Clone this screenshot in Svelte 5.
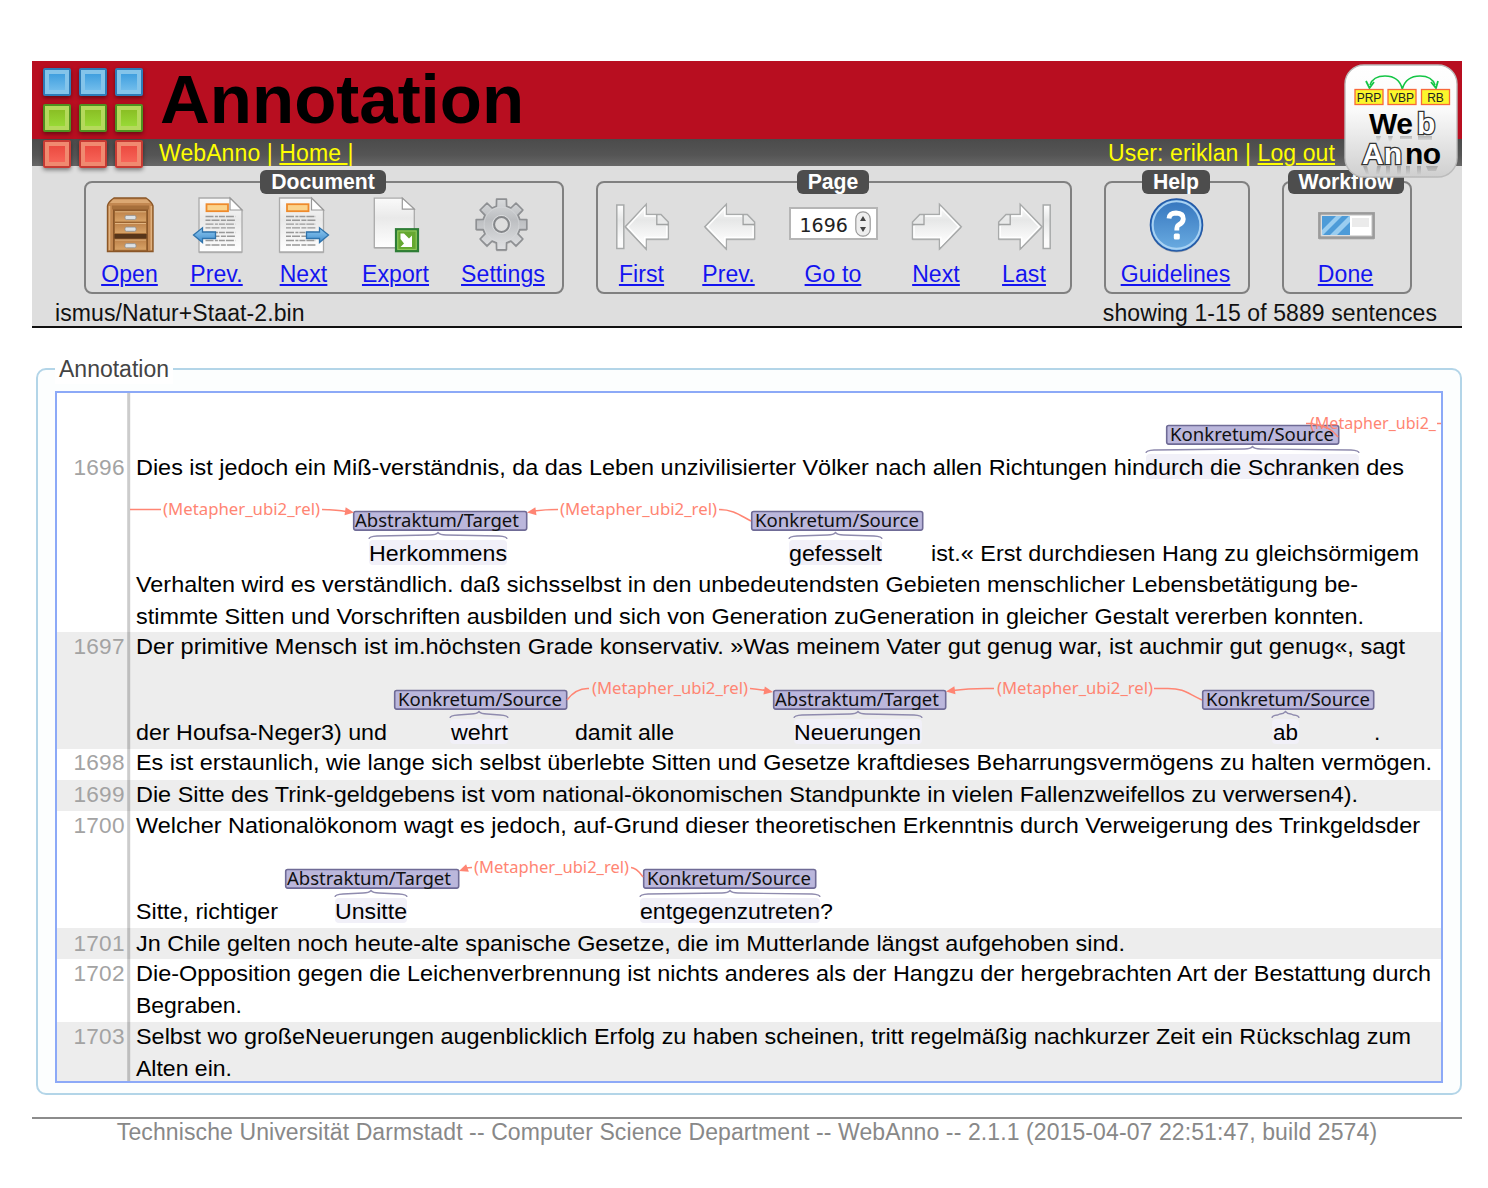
<script>
  const squares = ['blue', 'blue', 'blue', 'green', 'green', 'green', 'red', 'red', 'red'];

  const groups = [
    {
      id: 'document',
      title: 'Document',
      items: [
        ['open', 'Open'],
        ['docPrev', 'Prev.'],
        ['docNext', 'Next'],
        ['export', 'Export'],
        ['settings', 'Settings']
      ]
    },
    {
      id: 'page',
      title: 'Page',
      items: [
        ['first', 'First'],
        ['prev', 'Prev.'],
        ['goto', 'Go to'],
        ['next', 'Next'],
        ['last', 'Last']
      ]
    },
    { id: 'help', title: 'Help', items: [['help', 'Guidelines']] },
    { id: 'workflow', title: 'Workflow', items: [['done', 'Done']] }
  ];

  // Eight-toothed outline for the settings icon
  function gearPath(cx, cy, outer, inner) {
    const pts = [];
    for (let i = 0; i < 8; i++) {
      const a = (i * Math.PI) / 4;
      for (const [d, r] of [[-0.27, inner], [-0.19, outer], [0.19, outer], [0.27, inner]]) {
        pts.push(`${(cx + r * Math.sin(a + d)).toFixed(1)} ${(cy - r * Math.cos(a + d)).toFixed(1)}`);
      }
    }
    return `M${pts.join('L')}Z`;
  }
  const gear = gearPath(28.5, 28.5, 25.8, 19);

  // Every line is drawn around its own text baseline (y = 0).
  // words: [x, end, text]; spans: [x, end] of marked text; tags: [x, end, label]
  // arcs: {path, head: [x, y, angle], text: [x, width, label]}
  const REL = '(Metapher_ubi2_rel)';
  const SRC = 'Konkretum/Source';
  const TGT = 'Abstraktum/Target';
  const lines = [
    { no: 1696, up: 82, down: 9,
      words: [[136, 1404, 'Dies ist jedoch ein Miß-verständnis, da das Leben unzivilisierter Völker nach allen Richtungen hindurch die Schranken des']],
      spans: [[1146, 1359]], tags: [[1166, 1339, SRC]],
      arcs: [
        { path: 'M1306 -51.5H1313M1313 -51Q1330 -49 1338 -38', text: [1310, 126, '(Metapher_ubi2_'] },
        { path: 'M1437 -51.5H1442' }
      ] },
    { up: 77, down: 9,
      words: [[369, 507, 'Herkommens'], [789, 882, 'gefesselt'], [931, 1419, 'ist.« Erst durchdiesen Hang zu gleichsörmigem']],
      spans: [[369, 507], [789, 882]], tags: [[353, 527, TGT], [751, 923, SRC]],
      arcs: [
        { path: 'M130 -51.5H161M322 -51.5Q338 -51 346 -49.5', head: [354, -48.5, 8], text: [163, 157, REL] },
        { path: 'M558 -51.5Q545 -51.5 534 -50M719 -51.5C734 -51.5 741 -45 751 -40', head: [527, -48.5, 172], text: [560, 157, REL] }
      ] },
    { up: 22, down: 9, words: [[136, 1358, 'Verhalten wird es verständlich. daß sichsselbst in den unbedeutendsten Gebieten menschlicher Lebensbetätigung be-']] },
    { up: 23, down: 8, words: [[136, 1364, 'stimmte Sitten und Vorschriften ausbilden und sich von Generation zuGeneration in gleicher Gestalt vererben konnten.']] },
    { no: 1697, shade: true, up: 22, down: 9, words: [[136, 1405, 'Der primitive Mensch ist im.höchsten Grade konservativ. »Was meinem Vater gut genug war, ist auchmir gut genug«, sagt']] },
    { shade: true, up: 77, down: 9,
      words: [[136, 387, 'der Houfsa-Neger3) und'], [451, 508, 'wehrt'], [575, 674, 'damit alle'], [794, 921, 'Neuerungen'], [1273, 1298, 'ab'], [1374, 1380, '.']],
      spans: [[450, 508], [794, 922], [1272, 1299]], tags: [[394, 567, SRC], [773, 946, TGT], [1202, 1374, SRC]],
      arcs: [
        { path: 'M567 -40C573 -48 580 -52 589 -51.5M750 -51.5Q757 -51 766 -49.5', head: [773, -48, 10], text: [592, 156, REL] },
        { path: 'M994 -51.5Q970 -52 953 -49.5M1154 -51.5H1168C1185 -51.5 1188 -46 1202 -40', head: [946, -48.5, 172], text: [997, 156, REL] }
      ] },
    { no: 1698, up: 21, down: 10, words: [[136, 1432, 'Es ist erstaunlich, wie lange sich selbst überlebte Sitten und Gesetze kraftdieses Beharrungsvermögens zu halten vermögen.']] },
    { no: 1699, shade: true, up: 22, down: 9, words: [[136, 1358, 'Die Sitte des Trink-geldgebens ist vom national-ökonomischen Standpunkte in vielen Fallenzweifellos zu verwersen4).']] },
    { no: 1700, up: 22, down: 9, words: [[136, 1420, 'Welcher Nationalökonom wagt es jedoch, auf-Grund dieser theoretischen Erkenntnis durch Verweigerung des Trinkgeldsder']] },
    { up: 77, down: 9,
      words: [[136, 278, 'Sitte, richtiger'], [335, 407, 'Unsitte'], [640, 833, 'entgegenzutreten?']],
      spans: [[335, 407], [640, 820]], tags: [[285, 459, TGT], [643, 816, SRC]],
      arcs: [
        { path: 'M472 -51.5L466 -51M631 -51.5C637 -51 640 -46 643 -42', head: [459, -48, 160], text: [474, 155, REL] }
      ] },
    { no: 1701, shade: true, up: 23, down: 8, words: [[136, 1125, 'Jn Chile gelten noch heute-alte spanische Gesetze, die im Mutterlande längst aufgehoben sind.']] },
    { no: 1702, up: 22, down: 9, words: [[136, 1431, 'Die-Opposition gegen die Leichenverbrennung ist nichts anderes als der Hangzu der hergebrachten Art der Bestattung durch']] },
    { up: 23, down: 9, words: [[136, 242, 'Begraben.']] },
    { no: 1703, shade: true, up: 22, down: 9, words: [[136, 1411, 'Selbst wo großeNeuerungen augenblicklich Erfolg zu haben scheinen, tritt regelmäßig nachkurzer Zeit ein Rückschlag zum']] },
    { shade: true, up: 23, down: 5, words: [[136, 232, 'Alten ein.']] }
  ];

  function brace(a, b) {
    const m = (a + b) / 2;
    const r = Math.min(8, (b - a) / 5);
    return `M${a} -22Q${a} -24.5 ${a + r} -25L${m - r} -26Q${m - 2} -26 ${m} -28.5Q${m + 2} -26 ${m + r} -26L${b - r} -25Q${b} -24.5 ${b} -22`;
  }
</script>

{#snippet docSheet(x, w, lines)}
  <path d="M{x} 2H{x + w - 12}L{x + w} 14V56H{x}Z" fill="#999" transform="translate(0 1.2)" opacity=".6" />
  <path d="M{x} 2H{x + w - 12}L{x + w} 14V56H{x}Z" fill="url(#paper)" stroke="#aaa" stroke-width="1.3" />
  <path d="M{x + w - 12} 2V14H{x + w}Z" fill="#fff" stroke="#999" stroke-width="1.2" />
  {#if lines}
    <rect x={x + 7.5} y="8.2" width="21.5" height="7" fill="#fbd38c" stroke="#ee8a2c" stroke-width="1.8" />
    {#each [20.5, 24.3, 28.1, 31.9, 36.5, 40.3, 44.5, 49] as y, i}
      <path d="M{x + 6.5} {y}h30" stroke="#999" stroke-width="1.4" stroke-dasharray={i % 2 ? '5 1 8 1.4' : '8 1.4 3 1 6 1'} />
    {/each}
  {/if}
{/snippet}

{#snippet pageArrow(tip, neck, right, dir)}
  {@const f = dir * 11.5}
  {@const c = dir * 7.3}
  <path d="M{tip} 30.7L{neck} 8.3V18.5H{right - c}L{right} 26V43H{neck}V53Z" fill="#999" opacity=".5" transform="translate(0 1.2)" />
  <path d="M{tip} 30.7L{neck} 8.3V18.5H{right - c}L{right} 26V43H{neck}V53Z" fill="url(#arrowFill)" stroke="#a8aaaa" stroke-width="1.5" />
  <path d="M{right - f - dir} 20H{neck - dir * 1.4}V12L{tip + dir * 2.5} 30.7L{neck - dir * 1.4} 49.5V41.5H{right - dir * 1.5}V30" fill="none" stroke="#fff" stroke-width="1.4" />
  <path d="M{right - f} 18.5V28.5H{right}" fill="none" stroke="#a0a2a2" stroke-width="1.3" />
{/snippet}

{#snippet icon(name)}
  <svg class="icon" viewBox="0 0 60 60" aria-hidden="true">
    {#if name === 'open'}
      <path d="M7.5 10Q8 6 14 2H46Q52 6 53 10V55.5H7.5Z" fill="#c28750" stroke="#8b5727" stroke-width="1.4" />
      <path d="M13 3.5H47L50 7H10Z" fill="#dba873" />
      <path d="M9.5 10V54M51.3 10V54" stroke="#e0b27f" stroke-width="1.5" />
      <rect x="13" y="12.5" width="35" height="43" fill="#8a572a" />
      <rect x="12" y="9.5" width="37" height="4" fill="#a66f3b" />
      {#each [15, 26.7, 43.2] as y}
        <rect x="14.5" y={y} width="32" height="11" fill="url(#wood)" stroke="#9a632f" stroke-width=".8" />
        <path d="M15 {y + .8}h31" stroke="#e2b581" />
        <rect x="25" y={y + 4.4} width="11" height="4.2" rx="1.5" fill="#dde1e4" stroke="#8e8f90" stroke-width=".8" />
      {/each}
      <rect x="14.5" y="38" width="32" height="4.5" fill="#57351a" />
    {:else if name === 'docPrev'}
      {@render docSheet(12, 43, true)}
      <path d="M6.5 39L15.5 31.8V36H28.5V42.5H15.5V46.5Z" fill="url(#blueArrow)" stroke="#2f73ac" stroke-width="1.3" />
    {:else if name === 'docNext'}
      {@render docSheet(5.5, 44, true)}
      <path d="M54.5 39L45.5 31.8V36H32.5V42.5H45.5V46.5Z" fill="url(#blueArrow)" stroke="#2f73ac" stroke-width="1.3" />
    {:else if name === 'export'}
      <g transform="translate(0 .2) scale(1 .92)">{@render docSheet(8.3, 40, false)}</g>
      <rect x="30" y="33.2" width="22" height="22" fill="#65a830" stroke="#2e7d36" stroke-width="2.2" />
      <rect x="31.8" y="35" width="18.4" height="18.4" fill="none" stroke="#93cb62" stroke-width="1" />
      <path d="M34.5 37.5H38L43 42.5L46 39.5V51H34.5L38 47.5L34.5 43Z" fill="#fff" />
    {:else if name === 'settings'}
      <path d={gear} fill="#888" opacity=".45" transform="translate(0 1.5)" />
      <path d={gear} fill="url(#metal)" stroke="#8e9093" stroke-width="1.7" stroke-linejoin="round" />
      <circle cx="28.5" cy="28.5" r="17.4" fill="none" stroke="#dcdee0" stroke-width="1" opacity=".5" />
      <circle cx="28.5" cy="28.5" r="9" fill="none" stroke="#dfe0e2" stroke-width="1" />
      <circle cx="28.5" cy="28.5" r="7.4" fill="#dedede" stroke="#85878a" stroke-width="2" />
    {:else if name === 'first'}
      <rect x="4.8" y="9" width="7" height="43.5" fill="url(#arrowFill)" stroke="#a8aaaa" stroke-width="1.5" />
      {@render pageArrow(13.2, 34.2, 56.3, 1)}
    {:else if name === 'prev'}
      {@render pageArrow(5.8, 27.3, 55.6, 1)}
    {:else if name === 'next'}
      {@render pageArrow(55.3, 33.5, 6.5, -1)}
    {:else if name === 'last'}
      {@render pageArrow(48, 26.2, 4.7, -1)}
      <rect x="49.2" y="9" width="7" height="43.5" fill="url(#arrowFill)" stroke="#a8aaaa" stroke-width="1.5" />
    {:else if name === 'help'}
      <circle cx="29.5" cy="30" r="26.5" fill="#888" opacity=".5" />
      <circle cx="29.5" cy="29" r="26" fill="url(#helpFill)" stroke="#2259a8" stroke-width="1.6" />
      <circle cx="29.5" cy="29" r="23.8" fill="none" stroke="#a9d2f3" stroke-width="2" />
      <path d="M22 22.5Q22.5 17 29 17Q36.5 17.3 36.3 23Q36 27 31.5 29Q29.7 30 29.8 34.5" fill="none" stroke="#fff" stroke-width="4.8" />
      <rect x="26.8" y="37.5" width="6" height="6" rx="1.5" fill="#fff" />
    {:else if name === 'done'}
      <rect x="2" y="18" width="55" height="26" fill="#aaa" opacity=".35" />
      <rect x="2.5" y="17.5" width="54" height="24" fill="#fff" stroke="#9b9b9b" stroke-width="2.8" />
      <rect x="4.3" y="19.3" width="50.4" height="20.4" fill="none" stroke="#d6d6d6" />
      <rect x="35" y="22" width="17" height="9" fill="#ebebeb" />
      <rect x="5" y="20" width="28" height="19" fill="#4d9bd8" />
      <path d="M5 34L19 20H25L6 39H5ZM13 39L32 20H33V26L20 39Z" fill="#9acdf0" />
    {/if}
  </svg>
{/snippet}

<svg class="defs" width="0" height="0" aria-hidden="true">
  <defs>
    <linearGradient id="paper" x1="0" y1="0" x2="0" y2="1"><stop offset="0" stop-color="#fafafa" /><stop offset=".4" stop-color="#e9e9e9" /><stop offset="1" stop-color="#fff" /></linearGradient>
    <linearGradient id="arrowFill" x1="0" y1="0" x2="0" y2="1"><stop offset="0" stop-color="#fff" /><stop offset=".35" stop-color="#e6e7e7" /><stop offset=".8" stop-color="#fbfbfb" /></linearGradient>
    <linearGradient id="wood" x1="0" y1="0" x2="0" y2="1"><stop offset="0" stop-color="#bd8149" /><stop offset="1" stop-color="#d9a468" /></linearGradient>
    <linearGradient id="blueArrow" x1="0" y1="0" x2="0" y2="1"><stop offset="0" stop-color="#8fc9f0" /><stop offset="1" stop-color="#428fd0" /></linearGradient>
    <linearGradient id="metal" x1="0" y1="0" x2="0" y2="1"><stop offset="0" stop-color="#d8dadc" /><stop offset=".4" stop-color="#bcbec1" /><stop offset="1" stop-color="#e0e1e3" /></linearGradient>
    <linearGradient id="helpFill" x1="0" y1="0" x2="0" y2="1"><stop offset="0" stop-color="#3474bd" /><stop offset="1" stop-color="#6bade2" /></linearGradient>
    <linearGradient id="badge" x1="0" y1="0" x2="0" y2="1"><stop offset="0" stop-color="#fff" /><stop offset=".4" stop-color="#fafafa" /><stop offset="1" stop-color="#cfcfcf" /></linearGradient>
    <linearGradient id="mirror" x1="0" y1="0" x2="0" y2="1"><stop offset="0" stop-color="#000" stop-opacity=".22" /><stop offset="1" stop-color="#000" stop-opacity="0" /></linearGradient>
  </defs>
</svg>

<div class="page">
  <header>
    <div class="banner">
      <div class="squares">
        {#each squares as color}<i class={color}></i>{/each}
      </div>
      <h1>Annotation</h1>
    </div>
    <nav>
      <span>WebAnno | <a href="#home">Home&nbsp;</a>|</span>
      <span class="user">User: eriklan | <a href="#logout">Log out</a></span>
    </nav>
    <div class="toolbar">
      {#each groups as group}
        <section class="group {group.id}">
          <h2>{group.title}</h2>
          <div class="items">
            {#each group.items as [name, label]}
              <div class="item">
                {#if name === 'goto'}
                  <div class="slot">
                    <div class="number">
                      <span>1696</span>
                      <svg viewBox="0 0 16 26" aria-hidden="true">
                        <rect x=".8" y=".8" width="14.4" height="24.4" rx="7" fill="#eee" stroke="#999" stroke-width="1.2" />
                        <path d="M8 5L11 10H5ZM8 21L11 16H5Z" fill="#444" />
                      </svg>
                    </div>
                  </div>
                {:else}
                  {@render icon(name)}
                {/if}
                <a href="#{name}">{label}</a>
              </div>
            {/each}
          </div>
        </section>
      {/each}
    </div>
    <div class="status">
      <span>ismus/Natur+Staat-2.bin</span>
      <span class="count">showing 1-15 of 5889 sentences</span>
    </div>

    <svg class="badge" viewBox="0 0 114 114" aria-label="WebAnno">
      <rect x="1" y="1" width="112" height="112" rx="19" fill="url(#badge)" stroke="#bbb" stroke-width="1.4" />
      <path d="M26 21Q29 12 41 12Q55 12 58.3 25Q62 12 76 12Q88 12 91 21" fill="none" stroke="#14c545" stroke-width="1.6" />
      <path d="M22 17L25.5 24L30 18M87 18L92 24L94 17" fill="none" stroke="#14c545" stroke-width="1.8" />
      {#each [[11, 'PRP'], [44, 'VBP'], [77.5, 'RB']] as [x, tag]}
        <rect {x} y="25.5" width="28" height="15" fill="#fbf72c" stroke="#f8693a" stroke-width="1.3" />
        <text class="pos" x={x + 14} y="37.5">{tag}</text>
      {/each}
      <path d="M32 72h5l-2 6h-2zM44 72h5l-2 6h-2zM56 72h12v3h-12zM74 72h14v4h-14z" fill="url(#mirror)" />
      <path d="M19 102h4l2 8h-3zM33 102h4l-2 8h-3zM42 102h4v9h-4zM53 102h4v9h-4zM62 102h4v9h-4zM73 102h4v9h-4zM82 102h12l-2 5h-8z" fill="url(#mirror)" />
      <text class="logo" x="25" y="70" textLength="44">We</text>
      <text class="logo hollow" x="73" y="70">b</text>
      <text class="logo hollow" x="18" y="100" textLength="40">An</text>
      <text class="logo" x="61" y="100" textLength="36">no</text>
    </svg>
  </header>

  <main>
    <div class="caption">Annotation</div>
    <div class="sheet">
      {#each lines as line}
        <svg class="line" class:shade={line.shade} width="1384" height={line.up + line.down} viewBox="57 {-line.up} 1384 {line.up + line.down}">
          <rect x="127.2" y={-line.up} width="3" height={line.up + line.down} fill="#000" opacity=".2" />
          {#if line.no}<text class="no" x="73.5" y="0" textLength="51">{line.no}</text>{/if}
          {#each line.spans ?? [] as [a, b]}
            <rect x={a} y="-21" width={b - a} height="25" rx="4" fill="#f1f0f8" />
            <path d={brace(a, b)} fill="none" stroke="#8f8bae" stroke-width="1.3" />
          {/each}
          {#each line.words as [x, end, text]}
            {#if text === '.'}
              <text {x} y="0">.</text>
            {:else}
              <text {x} y="0" textLength={end - x} lengthAdjust="spacingAndGlyphs">{text}</text>
            {/if}
          {/each}
          {#each line.tags ?? [] as [a, b, label]}
            <rect x={a + 0.7} y="-49.5" width={b - a - 1} height="18.6" rx="2" fill="#bbb7dc" stroke="#6f6b96" stroke-width="1.6" />
            <text class="tag" x={label === TGT ? a + 2 : a + 4} y="-34.5" textLength="164" lengthAdjust="spacingAndGlyphs">{label}</text>
          {/each}
          {#each line.arcs ?? [] as arc}
            <path d={arc.path} fill="none" stroke="#ff8573" stroke-width="1.5" />
            {#if arc.head}
              <path d="M0 0L-9 -4V4Z" fill="#ff8573" transform="translate({arc.head[0]} {arc.head[1]}) rotate({arc.head[2]})" />
            {/if}
            {#if arc.text}
              <text class="rel" x={arc.text[0]} y="-46" textLength={arc.text[1]} lengthAdjust="spacingAndGlyphs">{arc.text[2]}</text>
            {/if}
          {/each}
        </svg>
      {/each}
    </div>
  </main>

  <footer>Technische Universität Darmstadt -- Computer Science Department -- WebAnno -- 2.1.1 (2015-04-07 22:51:47, build 2574)</footer>
</div>

<style>
  :global(body) { background: #fff; }
  .defs { position: absolute; }
  .page {
    box-sizing: border-box;
    width: 1488px;
    height: 1188px;
    padding: 61px 26px 0 32px;
    font: 23px/27px 'Liberation Sans', Arial, sans-serif;
    letter-spacing: .1px;
    color: #111;
    overflow: hidden;
  }
  header { position: relative; height: 265px; border-bottom: 2px solid #111; background: #dedede; }
  .banner { height: 78px; background: #b80e20; display: flex; }
  .squares {
    position: relative;
    z-index: 1;
    margin: 7px 0 0 11px;
    display: grid;
    grid-template-columns: repeat(3, 28px);
    grid-auto-rows: 28px;
    gap: 8px;
    width: 117px;
    height: 71px;
  }
  .squares i { box-sizing: border-box; border: 2.5px solid; border-radius: 2px; }
  .squares .blue { border-color: #2c7cb8; background: linear-gradient(#3498dc, #7cc3ee); box-shadow: inset 0 0 0 4px #84c4ea, 0 2px 4px rgba(0, 0, 0, .45); }
  .squares .green { border-color: #4f9220; background: linear-gradient(#86b820, #9ce03a); box-shadow: inset 0 0 0 4px #b5d95c, 0 2px 4px rgba(0, 0, 0, .45); }
  .squares .red { border-color: #c73a33; background: linear-gradient(#e8443a, #fa6a5e); box-shadow: inset 0 0 0 4px #f08a70, 0 2px 4px rgba(0, 0, 0, .45); }
  h1 { margin: 0; font-size: 69px; line-height: 78px; letter-spacing: 0; color: #000; font-weight: bold; }
  nav {
    box-sizing: border-box;
    display: flex;
    justify-content: space-between;
    height: 27px;
    padding: 0 127px;
    line-height: 28px;
    background: linear-gradient(#4b4b4b, #555 60%, #686868);
    color: #ff0;
  }
  nav a { color: #ff0; }
  a { text-underline-offset: 2px; text-decoration-thickness: 1.5px; }
  .toolbar { display: flex; gap: 32px; padding: 15px 50px 0 52px; }
  .group { box-sizing: border-box; height: 113px; border: 2px solid #808080; border-radius: 8px; display: flex; flex-direction: column; align-items: center; }
  .document { width: 480px; }
  .page .group.page { width: 476px; height: 113px; padding: 0; overflow: visible; }
  .help { width: 146px; }
  .workflow { width: 130px; }
  h2 {
    flex: none;
    margin: -13px 2px 0 0;
    height: 24px;
    padding: 0 11px;
    border-radius: 6px;
    background: #4d4d4d;
    color: #fff;
    font-size: 21.2px;
    letter-spacing: 0;
    line-height: 24px;
    font-weight: bold;
  }
  .items { display: grid; width: 100%; margin-top: 2px; }
  .document .items { grid-template-columns: 87px 87px 87px 97px 118px; }
  .page.group .items { grid-template-columns: 87px 87px 122px 84px 92px; }
  .item { display: flex; flex-direction: column; align-items: center; white-space: nowrap; }
  .item a { color: #1414f0; margin-top: 5px; }
  .help .item a, .workflow .item a { margin-right: 3px; }
  .icon { width: 60px; height: 60px; display: block; }
  .slot { height: 60px; }
  .number {
    box-sizing: border-box;
    width: 89px;
    height: 33px;
    margin-top: 11px;
    border: 2px solid #b5b5b5;
    background: #fff;
    display: flex;
    align-items: center;
    justify-content: space-between;
    padding: 0 5px 0 9px;
    color: #222;
    font: 19px 'DejaVu Sans', sans-serif;
    letter-spacing: 0;
  }
  .number span { padding-top: 2px; }
  .number svg { width: 16px; height: 26px; }
  .status { display: flex; justify-content: space-between; padding: 6px 25px 0 23px; }
  .badge { position: absolute; left: 1312px; top: 3px; width: 114px; height: 114px; z-index: 2; }
  .pos { font: 12px 'Liberation Sans', sans-serif; letter-spacing: 0; text-anchor: middle; fill: #222; }
  .logo { font: bold 30px 'Liberation Sans', sans-serif; letter-spacing: 0; fill: #000; }
  .hollow { fill: #fff; stroke: #333; stroke-width: 2.6px; paint-order: stroke; }

  main {
    position: relative;
    box-sizing: border-box;
    margin: 40px 0 0 4px;
    width: 1426px;
    height: 727px;
    border: 2px solid #b3d5e8;
    border-radius: 10px;
    background: #fcfefe;
    padding: 0 17px;
  }
  .caption { width: fit-content; margin-top: -14px; height: 28px; padding: 0 4px; background: #fff; color: #444; letter-spacing: 0; }
  .sheet { margin-top: 7px; box-sizing: border-box; width: 1388px; height: 692px; border: 2px solid #8ca9f7; background: #fff; display: flex; flex-direction: column; overflow: hidden; }
  .line { display: block; flex: none; letter-spacing: 0; }
  .line text { font: 22.6px 'Liberation Sans', Arial, sans-serif; fill: #000; white-space: pre; }
  .line.shade { background: #ededed; }
  .line .no { fill: #a3a3a3; }
  .line .tag { font: 18.5px 'Noto Sans', 'Open Sans', sans-serif; fill: #111; }
  .line .rel { font: 16px 'Noto Sans', 'Open Sans', sans-serif; fill: #ff8573; }
  footer { margin-top: 22px; border-top: 2px solid #8c8c8c; text-align: center; color: #888; white-space: nowrap; }
</style>
